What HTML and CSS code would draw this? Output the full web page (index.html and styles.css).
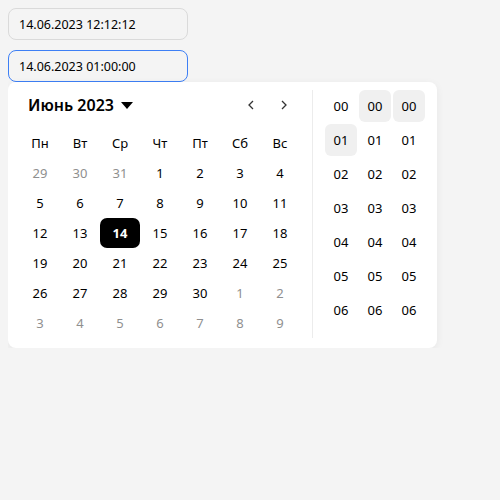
FILE: index.html
```html
<!DOCTYPE html>
<html lang="ru">
<head>
    <meta charset="UTF-8">
    <title>Выбор даты</title>
    <link rel="stylesheet" href="styles.css">
</head>
<body>
    <div class="field">14.06.2023 12:12:12</div>
    <div class="field field-active">14.06.2023 01:00:00</div>

    <div class="popup">
        <div class="calendar">
            <div class="cal-header">
                <div class="cal-title">
                    Июнь 2023
                    <svg class="caret" width="12" height="8" viewBox="0 0 12 8"><path d="M0 0h12L6 7z" fill="#000"/></svg>
                </div>
                <div class="nav">
                    <button class="nav-btn"><svg width="6" height="10" viewBox="0 0 6 10"><path d="M5 1L1 5l4 4" fill="none" stroke="#333" stroke-width="1.3"/></svg></button>
                    <button class="nav-btn"><svg width="6" height="10" viewBox="0 0 6 10"><path d="M1 1l4 4-4 4" fill="none" stroke="#333" stroke-width="1.3"/></svg></button>
                </div>
            </div>
            <div class="days" id="days">
                <div class="wd">Пн</div><div class="wd">Вт</div><div class="wd">Ср</div><div class="wd">Чт</div><div class="wd">Пт</div><div class="wd">Сб</div><div class="wd">Вс</div>
            </div>
        </div>
        <div class="divider"></div>
        <div class="time">
            <div class="time-col" id="hours"></div>
            <div class="time-col" id="minutes"></div>
            <div class="time-col" id="seconds"></div>
        </div>
    </div>

    <script>
        const days = document.getElementById('days');
        const list = [];
        [29, 30, 31].forEach(d => list.push({ d, muted: true }));
        for (let d = 1; d <= 30; d++) list.push({ d });
        for (let d = 1; d <= 9; d++) list.push({ d, muted: true });
        list.forEach(item => {
            const el = document.createElement('div');
            el.className = 'day';
            if (item.muted) el.classList.add('muted');
            if (!item.muted && item.d === 14) el.classList.add('selected');
            el.textContent = item.d;
            days.appendChild(el);
        });

        function fillTime(id, active) {
            const col = document.getElementById(id);
            for (let i = 0; i < 7; i++) {
                const el = document.createElement('div');
                el.className = 'tm';
                if (i === active) el.classList.add('tm-active');
                el.textContent = String(i).padStart(2, '0');
                col.appendChild(el);
            }
        }
        fillTime('hours', 1);
        fillTime('minutes', 0);
        fillTime('seconds', 0);
    </script>
</body>
</html>
```

FILE: styles.css
```css
body {
    margin: 8px;
    background-color: #f4f4f4;
    font-family: "Noto Sans", "Open Sans", sans-serif;
    font-size: 13px;
    color: #000;
}
.field {
    box-sizing: border-box;
    width: 180px;
    height: 32px;
    border: 1px solid #dadada;
    border-radius: 8px;
    padding: 0 10px;
    display: flex;
    align-items: center;
    margin-bottom: 10px;
    font-size: 12.5px;
}
.field-active {
    border-color: #3d7ff5;
    margin-bottom: 0;
}
.popup {
    display: inline-flex;
    background: #fff;
    border-radius: 8px;
    padding: 8px 12px 10px 12px;
    box-shadow: 0 2px 8px rgba(0, 0, 0, 0.06);
}
.calendar {
    width: 280px;
}
.cal-header {
    display: flex;
    justify-content: space-between;
    align-items: center;
    height: 30px;
    margin-bottom: 8px;
}
.cal-title {
    padding-left: 8px;
    font-size: 16px;
    font-weight: 600;
    display: flex;
    align-items: center;
    gap: 7px;
}
.caret {
    margin-top: 1px;
}
.nav {
    display: flex;
    gap: 1px;
}
.nav-btn {
    width: 32px;
    height: 30px;
    border: none;
    background: none;
    padding: 0;
    display: flex;
    align-items: center;
    justify-content: center;
}
.days {
    display: grid;
    grid-template-columns: repeat(7, 40px);
    grid-auto-rows: 30px;
}
.wd, .day {
    display: flex;
    align-items: center;
    justify-content: center;
    padding-bottom: 1px;
}
.muted {
    color: #8f8f8f;
}
.selected {
    background: #000;
    color: #fff;
    font-weight: 700;
    border-radius: 7px;
}
.divider {
    width: 1px;
    background: #ececec;
    margin: 0 12px;
}
.time {
    display: flex;
    gap: 2px;
}
.time-col {
    display: flex;
    flex-direction: column;
    gap: 2px;
}
.tm {
    width: 32px;
    height: 32px;
    border-radius: 6px;
    display: flex;
    align-items: center;
    justify-content: center;
    padding-bottom: 1px;
    box-sizing: border-box;
}
.tm-active {
    background: #f0f0f0;
}
```
